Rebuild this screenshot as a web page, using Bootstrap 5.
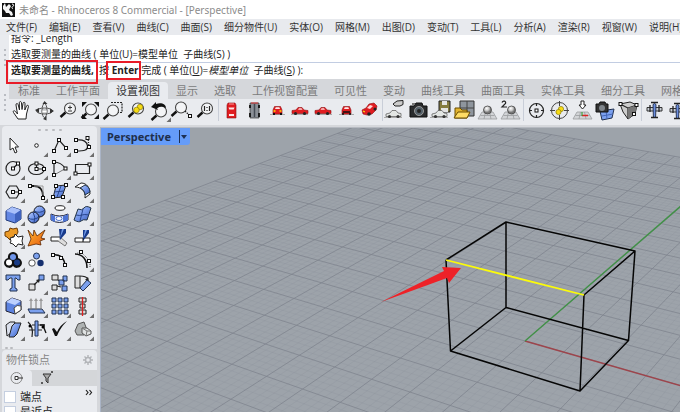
<!DOCTYPE html>
<html lang="zh-CN">
<head>
<meta charset="utf-8">
<meta name="viewport" content="width=device-width, initial-scale=1">
<title>未命名 - Rhinoceros 8 Commercial - [Perspective]</title>
<link href="https://cdn.jsdelivr.net/npm/bootstrap@5.3.0/dist/css/bootstrap.min.css" rel="stylesheet">
<style>
:root{--panel:#e9ebef;--chrome:#d5d7db;--ink:#222}
body{font:10px/16px "Open Sans","Noto Sans CJK SC",sans-serif;color:var(--ink);background:var(--chrome)}
.titlebar{height:19px;color:#8c8c8c;padding-left:2px;gap:4px;font-family:"Noto Sans","Noto Sans CJK SC",sans-serif}
.menubar{height:16px;background:#e8eaee;padding-left:6px;gap:12px}
.menubar a{color:#333;text-decoration:none}
.cmd{height:44px;background:#fff}
.grip{width:9px;background:var(--panel);flex:none}
.grip-dots{width:2px;background:repeating-linear-gradient(#b9bcc2 0 2px,transparent 2px 5px);height:17px}
.history{height:28px;border-bottom:1px solid #c2cde2}
.history div{line-height:16px;padding-left:2px}
.prompt{height:16px;line-height:15px;padding-left:2px}
.prompt input{border:0;outline:0;padding:0;background:transparent;font:inherit;min-width:0}
.callout{position:absolute;border:2px solid #e81c28}
.callout-a{left:6px;top:60px;width:92px;height:24px}
.callout-b{left:106px;top:61px;width:35px;height:19px}
.tabs{height:20px;padding:3px 0 0 1px}
.tabs button{border:0;background:transparent;padding:0 8px;font-size:11px;line-height:17px;color:#7b7b7b}
.tabs button.active{background:var(--panel);color:#333;border-radius:4px 4px 0 0}
.tools{background:var(--panel);height:26px;padding-left:1px}
.tool{width:23px;height:23px;padding:0;border:0;border-radius:0;background:transparent;flex:none;line-height:0;display:block}
.tool svg{width:23px;height:23px;display:block;overflow:visible}
.rule{width:1px;height:22px;background:#c9ced8;margin:0 1px;flex:none}
.side{width:100px;padding:1px 3px 0 2px;flex:none}
.palette{background:var(--panel);border-radius:4px 4px 0 0}
.dots{height:8px}
.dots i,.foot i{width:3px;height:2px;background:#b8babe;border-radius:1px}
.foot{height:8px;gap:2px;padding-left:3px}
.palette-grid{display:grid;grid-template-columns:repeat(4,23px)}
.snap{margin-top:1px;background:var(--panel);border-radius:4px 4px 0 0;overflow:hidden}
.snap h2{font-size:11px;line-height:20px;color:#858585;margin:0;font-weight:400}
.snap-tabs{background:#d4d6d9;height:16px}
.snap-tabs button{border:0;background:transparent;width:30px;height:16px;padding:0}
.snap-tabs button.active{background:var(--panel);border-radius:0 4px 0 0}
.checks{padding-top:3px}
.snap label{font-size:11px;line-height:15px}
.snap input{appearance:none;width:12px;height:12px;background:#fff;border:1px solid #c5cfe0;margin:0 4px 0 2px;flex:none}
.view{background:#9da3aa;border-left:1px solid #aab4c6;border-top:1px solid #b6bac1;margin-top:2px;min-width:0}
.view-label{position:absolute;left:0;top:0;background:#659cf9;height:17px;padding:0 3px 0 6px;border:0;border-radius:0 0 3px 0;font:bold 11px/16px "Noto Sans",sans-serif;color:#1f2f4b}
.view-label span{border-left:1px solid #1d3054;height:13px;padding-left:1px}
.s{fill:none;stroke:#222;stroke-width:1.2}
.w{fill:#fff;stroke:#222}
.b{fill:#7ba0ee;stroke:#20304f}
.y{fill:#f7dc14;stroke:#7b6b00;stroke-width:.6}
.r{fill:#e01c20;stroke:#8b0f12;stroke-width:.6}
</style>
</head>
<body class="vh-100 overflow-hidden d-flex flex-column position-relative">
<svg width="0" height="0" class="position-absolute" aria-hidden="true">
 <defs>
  <linearGradient id="blue" x2="1" y2="1"><stop stop-color="#b9cdfb"/><stop offset=".5" stop-color="#7396ea"/><stop offset="1" stop-color="#3558b5"/></linearGradient>
  <linearGradient id="flame" y2="1" x2="1"><stop stop-color="#ffb52e"/><stop offset="1" stop-color="#e65a10"/></linearGradient>
  <radialGradient id="ball" cx=".4" cy=".3"><stop stop-color="#fff"/><stop offset=".6" stop-color="#c5c5c5"/><stop offset="1" stop-color="#777"/></radialGradient>
  <path id="more" d="M23 18.500V23H18.500z" fill="#6d6d6d"/>
  <rect id="pt" x="-1.500" y="-1.500" width="3" height="3" fill="#fff" stroke="#111"/>
  <g id="lens"><path d="M7.500 13.500 2.500 18" stroke="#111" stroke-width="2.400"/><circle cx="12" cy="9.500" r="5.500" fill="#f3f4f6" stroke="#444" stroke-width="1.100"/></g>
  <g id="car"><path d="M3 15.500h17" stroke="#aaa"/><path d="M4 11.500 8 11l2-2.500h4l2 2.500 4 .5v3H4z" class="r"/><path d="M10 10.800 11 9.300h2.500l1 1.500z" fill="#ffd5d5"/><circle cx="7.500" cy="14.500" r="1.600" fill="#222"/><circle cx="16.500" cy="14.500" r="1.600" fill="#222"/></g>
  <g id="graycar"><path d="M2 18.500h18" stroke="#aaa"/><path d="M4 15l4-1 2-2.500h4l2 2.500 3 .5v3H4z" fill="#e3e6e4" stroke="#555" stroke-width=".7"/><circle cx="7.500" cy="17.500" r="1.600" fill="#333"/><circle cx="16" cy="17.500" r="1.600" fill="#333"/></g>
  <path id="floor" d="M6 14h11l4 7H2zM4.500 17.500h14M9.500 14 8 21M13.500 14l1.500 7" fill="#d2d4d7" stroke="#9b9da0" stroke-width=".8"/>
  <g id="plane"><path d="M4 8.500h15v3.500H4z" fill="#c9ced6" stroke="#222" stroke-width=".9"/><path d="M10 5.500q1.500-2 3 0l-.4 13h-2.200z" fill="#6c8fe0" stroke="#1d2a48" stroke-width=".9"/><path d="M8 3.500h7M7 6v7M16 6v7M8 18.500h7" stroke="#222" stroke-width="1.300"/></g>
 </defs>
</svg>

<header class="titlebar bg-white d-flex align-items-center flex-shrink-0">
 <svg width="13" height="15" viewBox="0 0 13 15"><path d="M0 1h13v14H0z" fill="#111"/><path d="M1 4l2-3 1 4 3-3 2 2-2 4 3 2 1 3-2 1-2-3-3 0-1-2-2-2z" fill="#f4f4f4"/><path d="M10 2c2 0 2 2 1 2.500s-2 1 0 2.500" stroke="#fff" fill="none"/></svg>
 <span>未命名 - Rhinoceros 8 Commercial - [Perspective]</span>
</header>
<nav class="menubar d-flex align-items-center text-nowrap overflow-hidden flex-shrink-0">
 <a href="#">文件(F)</a><a href="#">编辑(E)</a><a href="#">查看(V)</a><a href="#">曲线(C)</a><a href="#">曲面(S)</a><a href="#">细分物件(U)</a><a href="#">实体(O)</a><a href="#">网格(M)</a><a href="#">出图(D)</a><a href="#">变动(T)</a><a href="#">工具(L)</a><a href="#">分析(A)</a><a href="#">渲染(R)</a><a href="#">视窗(W)</a><a href="#">说明(H)</a>
</nav>
<section class="cmd d-flex flex-shrink-0">
 <div class="grip d-flex justify-content-center align-items-center"><div class="grip-dots"></div></div>
 <div class="flex-grow-1 overflow-hidden text-nowrap">
  <div class="history d-flex flex-column justify-content-end overflow-hidden"><div>指令: _Length</div><div>选取要测量的曲线 ( 单位(U)=模型单位&nbsp; 子曲线(S) )</div></div>
  <div class="prompt d-flex"><label for="cmdline"><b>选取要测量的曲线,</b>&nbsp; 按 <b>Enter</b> 完成 ( 单位(<u>U</u>)=<i>模型单位</i>&nbsp; 子曲线(<u>S</u>) ):</label><input id="cmdline" class="flex-grow-1" type="text"></div>
 </div>
</section>
<div class="callout callout-a"></div><div class="callout callout-b"></div>

<section class="d-flex flex-shrink-0">
 <div class="grip d-flex justify-content-center align-items-center"><div class="grip-dots"></div></div>
 <div class="flex-grow-1 overflow-hidden">
  <div class="tabs d-flex text-nowrap"><button>标准</button><button>工作平面</button><button class="active">设置视图</button><button>显示</button><button>选取</button><button>工作视窗配置</button><button>可见性</button><button>变动</button><button>曲线工具</button><button>曲面工具</button><button>实体工具</button><button>细分工具</button><button>网格工具</button></div>
  <div class="tools d-flex">
   <button class="btn tool" aria-label="平移"><svg viewBox="0 0 23 23"><path d="M8 20 3.500 13.500c-1-1.500.8-2.500 2-1L7.500 15 6 6c-.2-2 1.800-2 2.200-.2L9.500 11 9.300 4c0-2 2-2 2.200 0l.5 6.500L13 4.500c.3-1.800 2.200-1.500 2 .3L14.800 11l1.700-4c.8-1.500 2.300-.8 1.900.8L16.500 15l-.5 5z" class="w"/></svg></button>
   <button class="btn tool" aria-label="旋转视图"><svg viewBox="0 0 23 23"><ellipse cx="11.500" cy="12" rx="8" ry="3" fill="none" stroke="#555"/><ellipse cx="11.500" cy="11.500" rx="2.500" ry="7" fill="none" stroke="#555"/><path d="M11.500 2 14.500 5h-5zM2 11l4-2v5zM21 12l-4-2.500v5zM10 20l3.500-3v4.500z" fill="#333"/><path d="M9 11h5v3H9z" fill="#fff" stroke="#777" stroke-width=".6"/></svg></button>
   <button class="btn tool" aria-label="缩放"><svg viewBox="0 0 23 23"><use href="#lens" x="2"/><path d="M14 6.500v4M12 8.500h4M12 12h4" fill="none" stroke="#333"/></svg></button>
   <button class="btn tool" aria-label="缩放至范围"><svg viewBox="0 0 23 23"><use href="#lens" y="1"/><path d="M3 3h5L3 8zM20 3v5l-5-5zM20 20h-5l5-5zM3 20v-5l5 5z" fill="#111"/></svg></button>
   <button class="btn tool" aria-label="框选缩放"><svg viewBox="0 0 23 23"><path d="M9 3.500h11v10h-5" class="s" stroke-dasharray="2 1"/><use href="#lens" x="-1" y="2"/></svg></button>
   <button class="btn tool" aria-label="缩放至选取物体"><svg viewBox="0 0 23 23"><use href="#lens" x="1"/><circle cx="15" cy="8" r="2.800" class="y"/><circle cx="11.500" cy="11" r="2.800" class="y"/></svg></button>
   <button class="btn tool" aria-label="复原视图"><svg viewBox="0 0 23 23"><use href="#lens" x="1" y="3"/><path d="M3 8l5-5v2c5-2 10 0 10 4-3-2-6-2-9 0l1 2z" fill="#111"/><use href="#more"/></svg></button>
   <button class="btn tool" aria-label="缩放一比一"><svg viewBox="0 0 23 23"><use href="#lens" x="-2" y="-1"/><path d="M14 12l4 4" class="s" stroke-dasharray="1.500 1"/><use href="#pt" x="19" y="17"/></svg></button>
   <button class="btn tool" aria-label="一比一"><svg viewBox="0 0 23 23"><use href="#lens" x="1"/><path d="M10.500 7v5M15.500 7v5M13 8v1M13 11v1" class="s"/></svg></button>
   <span class="rule"></span>
   <button class="btn tool" aria-label="俯视"><svg viewBox="0 0 23 23"><path d="M8 4h7l1 2v13H7V6z" class="r"/><path d="M8.500 8.500h6l-.8 2H9.300zM9 15h5v2H9z" fill="#ffe4e4"/><path d="M9 5h5" stroke="#ff9a9a"/></svg></button>
   <button class="btn tool" aria-label="仰视"><svg viewBox="0 0 23 23"><path d="M7 4h9v15H7z" fill="#8b9097" stroke="#333" stroke-width=".7"/><path d="M11.500 5v13" stroke="#454b54" stroke-width="1.500"/><path d="M7 6v3M16 6v3M7 14v4M16 14v4" stroke="#111" stroke-width="1.800"/><path d="M8 4h7" stroke="#d33"/></svg></button>
   <button class="btn tool" aria-label="后视"><svg viewBox="0 0 23 23"><path d="M4 15.500h15" stroke="#aaa"/><path d="M7 11l1.500-3.500h6L16 11v4H7z" class="r"/><path d="M9 10l.8-1.800h3.500L14 10z" fill="#ffe8e8"/><path d="M7.500 12h2M13.500 12h2" stroke="#ffe000" stroke-width="1.500"/><path d="M7 15h2M14 15h2" stroke="#111" stroke-width="2"/></svg></button>
   <button class="btn tool" aria-label="左视"><svg viewBox="0 0 23 23"><use href="#car" x="-1"/></svg></button>
   <button class="btn tool" aria-label="右视"><svg viewBox="0 0 23 23"><g transform="matrix(-1 0 0 1 23 0)"><use href="#car"/></g></svg></button>
   <button class="btn tool" aria-label="前视"><svg viewBox="0 0 23 23"><path d="M4 15.500h15" stroke="#aaa"/><path d="M7 11l1.500-3.500h6L16 11v4H7z" class="r"/><path d="M9 10l.8-1.800h3.500L14 10z" fill="#ffe8e8"/><path d="M8 13h7M7 15h2M14 15h2" stroke="#111" stroke-width="1.500"/></svg></button>
   <button class="btn tool" aria-label="透视"><svg viewBox="0 0 23 23"><path d="M4 11l4-2 3-4 5-1 3 3-1 4-4 4-5 1-4-1z" class="r"/><path d="M9 9l3-3 3 1-3 3z" fill="#ffd9d9"/><path d="M5 12l2 1" stroke="#ff0"/><circle cx="11" cy="15" r="1.800" fill="#222"/><circle cx="17" cy="10" r="1.500" fill="#222"/></svg></button>
   <span class="rule"></span>
   <button class="btn tool" aria-label="视图方向"><svg viewBox="0 0 23 23"><use href="#graycar" x="-2"/><path d="M9 5l4-3 6-.5v4L16 7h-5z" fill="#ccc" stroke="#222"/></svg></button>
   <button class="btn tool" aria-label="相机"><svg viewBox="0 0 23 23"><path d="M3 7h4l2-3h6l1 3h4v11H3z" fill="#292b2d" stroke="#111"/><circle cx="12" cy="12" r="4.500" fill="#546069" stroke="#999"/><circle cx="12" cy="12" r="2" fill="#222"/><path d="M5 5h3" stroke="#777" stroke-width="2"/></svg></button>
   <button class="btn tool" aria-label="储存视图"><svg viewBox="0 0 23 23"><path d="M9 2h11v11H9z" fill="#857c40" stroke="#222"/><path d="M12 2h5v4h-5zM11 9h7v4h-7z" fill="#e4e4e4"/><use href="#graycar" x="-2"/></svg></button>
   <button class="btn tool" aria-label="打开视图"><svg viewBox="0 0 23 23"><path d="M7 2h14v15H7z" fill="#8e959d" stroke="#333"/><path d="M7 9h14M14 2v15" stroke="#444"/><path d="M2 9h5l2 2h5v8H2z" fill="#e3b42e" stroke="#6a4d00"/><path d="M1 19l4-6h12l-3 6z" fill="#ffdc65" stroke="#6a4d00"/></svg></button>
   <button class="btn tool" aria-label="球体视图"><svg viewBox="0 0 23 23"><use href="#floor" y="-1"/><circle cx="11.500" cy="11" r="4" fill="url(#ball)" stroke="#444" stroke-width=".8"/></svg></button>
   <button class="btn tool" aria-label="两点透视"><svg viewBox="0 0 23 23"><use href="#floor" y="-1"/><circle cx="12.500" cy="11" r="4" fill="url(#ball)" stroke="#444" stroke-width=".8"/><path d="M3 3.500C4 1 7.500 2 6.500 4.500L3 8h5" class="s"/></svg></button>
   <span class="rule"></span>
   <button class="btn tool" aria-label="目标点"><svg viewBox="0 0 23 23"><circle cx="11.500" cy="11.500" r="7" class="s"/><path d="M11.500 4v3M11.500 16v3M4 11.500h3M16 11.500h3" class="s"/><use href="#pt" x="11.500" y="11.500"/></svg></button>
   <button class="btn tool" aria-label="目标物件"><svg viewBox="0 0 23 23"><circle cx="11.500" cy="11.500" r="8" fill="none" stroke="#444"/><path d="M11.500 2v5M11.500 16v5M2 11.500h5M16 11.500h5" fill="none" stroke="#444"/><circle cx="13" cy="10" r="2.600" class="y"/><circle cx="10.500" cy="13" r="2.600" class="y"/></svg></button>
   <button class="btn tool" aria-label="工作平面"><svg viewBox="0 0 23 23"><use href="#floor" y="-1"/><path d="M10 2h3v4h2l-3.500 4L8 6h2z" class="w"/><path d="M11 16.500h6" stroke="#d22" stroke-width="1.500"/><path d="M11 17v-4" stroke="#292"/></svg></button>
   <button class="btn tool" aria-label="相机平面"><svg viewBox="0 0 23 23"><path d="M6 12l14-2-2 9-10 2z" class="b"/><path d="M8 17l11-2M12 11l1 9" stroke="#4466b7"/><path d="M2 5h3l1-2h5l1 2h2v8H2z" fill="#333" stroke="#111"/><circle cx="8" cy="9" r="3" fill="#7f858b"/></svg></button>
   <button class="btn tool" aria-label="视角框"><svg viewBox="0 0 23 23"><path d="M3 5l10-2 7 3-2 9-7 5-5-7z" fill="#ccc" stroke="#222"/><path d="M3 5l8 4v11M11 9l9-3" class="s"/><path d="M11 9l9-3-2 9-7 5z" fill="#777"/><use href="#pt" x="3.500" y="5"/><use href="#pt" x="19.500" y="6"/><use href="#pt" x="17" y="15"/></svg></button>
   <span class="rule"></span>
   <button class="btn tool" aria-label="飞行"><svg viewBox="0 0 23 23"><use href="#plane"/></svg></button>
   <button class="btn tool" aria-label="飞行设置"><svg viewBox="0 0 23 23"><use href="#plane" y="1"/></svg></button>
  </div>
 </div>
</section>

<main class="d-flex flex-grow-1 overflow-hidden">
 <aside class="side d-flex flex-column">
  <div class="palette">
   <div class="dots d-flex justify-content-center align-items-center gap-1"><i></i><i></i><i></i><i></i></div>
   <div class="palette-grid">
    <button class="btn tool" aria-label="选取"><svg viewBox="0 0 23 23"><path d="M8 4v12l3-2 2 5 2-1-2-5h3.500z" class="w"/></svg></button>
    <button class="btn tool" aria-label="点"><svg viewBox="0 0 23 23"><circle cx="11.500" cy="11.500" r="1.800" class="w"/><use href="#more"/></svg></button>
    <button class="btn tool" aria-label="多重直线"><svg viewBox="0 0 23 23"><path d="M6 17 11 6l7 8" class="s"/><use href="#pt" x="6" y="17"/><use href="#pt" x="11" y="6"/><use href="#pt" x="18" y="14"/><use href="#more"/></svg></button>
    <button class="btn tool" aria-label="控制点曲线"><svg viewBox="0 0 23 23"><path d="M5 17c9 0 12-1 11.500-5C16 8 13 5 5 6" class="s"/><path d="M17 4l1 9" class="s" stroke-dasharray="1 1"/><use href="#pt" x="5" y="17"/><use href="#pt" x="5" y="6"/><use href="#pt" x="16.500" y="4"/><use href="#pt" x="18" y="13"/><use href="#more"/></svg></button>

    <button class="btn tool" aria-label="圆"><svg viewBox="0 0 23 23"><circle cx="11" cy="11.500" r="7" class="s"/><path d="M11 11.500 16 6.500" class="s"/><use href="#pt" x="11" y="11.500"/><use href="#pt" x="16" y="6.500"/><use href="#more"/></svg></button>
    <button class="btn tool" aria-label="椭圆"><svg viewBox="0 0 23 23"><ellipse cx="11.500" cy="12" rx="8" ry="5.500" class="s"/><path d="M11.500 6.500V12h8" class="s"/><use href="#pt" x="11.500" y="12"/><use href="#pt" x="11.500" y="6.500"/><use href="#pt" x="19" y="12"/><use href="#more"/></svg></button>
    <button class="btn tool" aria-label="圆弧"><svg viewBox="0 0 23 23"><path d="M6 18V5c6 0 9 3 11.500 6.500" class="s"/><path d="M6 18l11.500-6.500" stroke="#777"/><use href="#pt" x="6" y="18"/><use href="#pt" x="6" y="5"/><use href="#pt" x="17.500" y="11.500"/><use href="#more"/></svg></button>
    <button class="btn tool" aria-label="矩形"><svg viewBox="0 0 23 23"><path d="M4.500 7.500h14v9h-14z" class="s"/><use href="#pt" x="4.500" y="16.500"/><use href="#pt" x="18.500" y="7.500"/><use href="#more"/></svg></button>

    <button class="btn tool" aria-label="多边形"><svg viewBox="0 0 23 23"><path d="M4 12l3.500-6h7l3.500 6-3.500 6h-7zM11 12h7" class="s"/><use href="#pt" x="11" y="12"/><use href="#pt" x="18" y="12"/><use href="#more"/></svg></button>
    <button class="btn tool" aria-label="圆角曲线"><svg viewBox="0 0 23 23"><path d="M4 6h5c6 0 9 4 9 10v3" fill="none" stroke="#111" stroke-width="1.800"/><path d="M9 6h9v9" stroke="#999" fill="none"/><use href="#pt" x="5" y="6"/><use href="#pt" x="18" y="18"/><use href="#more"/></svg></button>
    <button class="btn tool" aria-label="曲面"><svg viewBox="0 0 23 23"><path d="M8 6l10-1-4 12-9 1z" fill="url(#blue)" stroke="#222"/><path d="M6 12l10-1M13 6 9 17" stroke="#28458c"/><use href="#pt" x="8" y="6"/><use href="#pt" x="18" y="5"/><use href="#pt" x="15" y="17"/><use href="#pt" x="5" y="17"/><use href="#more"/></svg></button>
    <button class="btn tool" aria-label="旋转曲面"><svg viewBox="0 0 23 23"><path d="M4 7l6-4c6 0 9 5 9 11l-5 4c1-7-4-11-10-11z" fill="#fff" stroke="#222"/><path d="M9 8l5-3c3 1 5 4 5 7l-5 3c0-3-2-6-5-7z" fill="url(#blue)" stroke="#234"/><use href="#more"/></svg></button>

    <button class="btn tool" aria-label="立方体"><svg viewBox="0 0 23 23"><path d="M4 8l6-4 9 3v9l-6 4-9-3z" fill="#6387e3" stroke="#223b7a"/><path d="M4 8l6-4 9 3-6 4z" fill="#a9c0fa"/><path d="M13 11l6-4v9l-6 4z" fill="#3f62bd"/><use href="#more"/></svg></button>
    <button class="btn tool" aria-label="实体"><svg viewBox="0 0 23 23"><circle cx="14.500" cy="8.500" r="5.500" fill="url(#blue)" stroke="#111"/><circle cx="8.500" cy="14.500" r="5.500" fill="url(#blue)" stroke="#111"/><path d="M3 15q5 3 11-1M9 8q6 3 11-1M8 9q3 5 1 11" stroke="#28458c" fill="none"/><use href="#more"/></svg></button>
    <button class="btn tool" aria-label="挤出"><svg viewBox="0 0 23 23"><ellipse cx="12" cy="5" rx="5" ry="2.300" class="w"/><path d="M3 11q8.500 4 17 0v6q-8.500 5-17 0z" fill="#dfe9ff" stroke="#223"/><path d="M3 11q2 1.500 4 2v6q-2-.5-4-2zM15 13q3-.6 5-2v6q-2 1.500-5 2z" fill="#4c73d4"/><ellipse cx="11" cy="15.500" rx="3" ry="2" fill="#fff" stroke="#57c"/><use href="#more"/></svg></button>
    <button class="btn tool" aria-label="布帘"><svg viewBox="0 0 23 23"><path d="M7 6q4 2 6-1t7 0l-4 12q-4-1-6 1t-7-1z" fill="url(#blue)" stroke="#234"/><path d="M5 12q4 1 6 0t7 0M12 6 9 18" stroke="#28458c" fill="none"/><use href="#more"/></svg></button>

    <button class="btn tool" aria-label="组合"><svg viewBox="0 0 23 23"><path d="M3 6l4-1 1-3 3 1 4-1 1 4-2 4-4 1-2 3-3-3-2-1z" fill="#eb9a27" stroke="#6e3c05"/><path d="M8 12l4-1 1-3 3 3 5-1-1 5 1 4-5-1-2 3-3-3-3-1 1-2z" class="w"/><use href="#more"/></svg></button>
    <button class="btn tool" aria-label="炸开"><svg viewBox="0 0 23 23"><path d="M3 4l5 6L9 4l3 6 8-6-4 8 4 1-5 2 1 4-5-1-8 2 3-7z" fill="url(#flame)" stroke="#5b2400" stroke-width=".8"/></svg></button>
    <button class="btn tool" aria-label="修剪"><svg viewBox="0 0 23 23"><path d="M3 11h9v4H3z" class="w"/><path d="M12 11l7 6-2 3-7-5" fill="#ddd" stroke="#777"/><path d="M11 3h7v4l-6 7z" fill="#173a8b"/><path d="M14 3h2l-4 9z" fill="#719be8"/></svg></button>
    <button class="btn tool" aria-label="分割"><svg viewBox="0 0 23 23"><path d="M4 12h15v4H4z" class="w"/><path d="M12 4h6v3l-6 8z" fill="#173a8b"/><path d="M14 4h2l-4 9z" fill="#719be8"/><path d="M12 12v4" stroke="#111"/></svg></button>

    <button class="btn tool" aria-label="群组"><svg viewBox="0 0 23 23"><path d="M11 3a5 5 0 0 1 5 6 5 5 0 1 1-5 8 5 5 0 1 1-5-8 5 5 0 0 1 5-6z" fill="#111"/><circle cx="11" cy="8" r="3" fill="#6f96ec"/><circle cx="7" cy="13.500" r="3" fill="#fff"/><circle cx="15" cy="13.500" r="3" fill="#193b85"/><use href="#more"/></svg></button>
    <button class="btn tool" aria-label="解散群组"><svg viewBox="0 0 23 23"><circle cx="11.500" cy="7" r="3" class="b"/><circle cx="7" cy="14" r="3.200" fill="#fff" stroke="#555"/><circle cx="15.500" cy="14" r="3.200" fill="#152f6e"/></svg></button>
    <button class="btn tool" aria-label="编辑点"><svg viewBox="0 0 23 23"><path d="M5 6c8-1 12 4 12 12" fill="none" stroke="#111" stroke-width="1.500"/><use href="#pt" x="5" y="6"/><use href="#pt" x="13" y="9"/><use href="#pt" x="17" y="16"/></svg></button>
    <button class="btn tool" aria-label="控制点"><svg viewBox="0 0 23 23"><path d="M4 5c8 0 12 6 12 14" fill="none" stroke="#111" stroke-width="1.500"/><path d="M4 5l6-2 9 9v6" fill="none" stroke="#444" stroke-dasharray="1 1"/><use href="#pt" x="10" y="3"/><use href="#pt" x="18" y="12"/><use href="#more"/></svg></button>

    <button class="btn tool" aria-label="文字"><svg viewBox="0 0 23 23"><path d="M4 3h14v5h-2l-2-2h-1v10l2 1v2H8v-2l2-1V6H8L6 8H4z" class="b"/></svg></button>
    <button class="btn tool" aria-label="移动"><svg viewBox="0 0 23 23"><path d="M4 12h6v6H4z" fill="#ddd" stroke="#222"/><path d="M9 13l5-5" class="s"/><path d="M15 7l-1 4-3-3z" fill="#222"/><path d="M14 3h5v5h-5z" class="b"/><use href="#more"/></svg></button>
    <button class="btn tool" aria-label="复制"><svg viewBox="0 0 23 23"><path d="M4 3h6v5H4zM4 13h5v5H4z" fill="#ddd" stroke="#222"/><path d="M10 8l3 2M9 14l4 1" class="s"/><path d="M15 4h4v5h-4zM11 8h5v5h-5zM14 14h5v5h-5z" class="b"/></svg></button>
    <button class="btn tool" aria-label="旋转"><svg viewBox="0 0 23 23"><path d="M4 4h5v12H4z" fill="#ddd" stroke="#222"/><path d="M9 4q6 0 8 3" class="s"/><path d="M18 9l-4-1 3-3z" fill="#222"/><path d="M9 16l7-8 4 3-8 8z" class="b"/></svg></button>

    <button class="btn tool" aria-label="布尔"><svg viewBox="0 0 23 23"><path d="M4 7l6-4 9 3v9l-6 4-9-3z" fill="#5d83e0" stroke="#223"/><path d="M4 7l6-4 9 3-6 4z" fill="#bcd0ff"/><path d="M12 13q3-4 7-2v4l-6 4z" fill="#fff" stroke="#444"/><use href="#more"/></svg></button>
    <button class="btn tool" aria-label="投影"><svg viewBox="0 0 23 23"><path d="M3 14h14l3 4H5z" class="b"/><path d="M6 15V5M11 15V5M16 15V5" stroke="#777"/><path d="M6 3l-2 3h4zM11 3 9 6h4zM16 3l-2 3h4z" fill="#999"/><use href="#more"/></svg></button>
    <button class="btn tool" aria-label="阵列"><svg viewBox="0 0 23 23"><path d="M4 3h4v4H4zM10 3h4v4h-4zM16 3h4v4h-4zM4 9h4v4H4zM10 9h4v4h-4zM16 9h4v4h-4zM4 15h4v4H4zM10 15h4v4h-4zM16 15h4v4h-4z" class="b"/><use href="#more"/></svg></button>
    <button class="btn tool" aria-label="对齐"><svg viewBox="0 0 23 23"><path d="M8 3h7v4H8zM9 9h5v4H9zM8 15h7v4H8z" fill="#ddd" stroke="#222"/><path d="M11.500 2v19" stroke="#dc2020" stroke-width="1.300"/><use href="#more"/></svg></button>

    <button class="btn tool" aria-label="偏移"><svg viewBox="0 0 23 23"><path d="M4 7l4-3h5L9 15l-4 3z" fill="#dbe0ec" stroke="#222"/><path d="M10 8l3-3h6l-4 11-3 3H7z" fill="url(#blue)" stroke="#222"/><use href="#more"/></svg></button>
    <button class="btn tool" aria-label="弯曲"><svg viewBox="0 0 23 23"><path d="M3 4q6 5 4 15M7 7h13M4 12h13" class="s"/><path d="M10 3h3v15h-3z" class="b"/><path d="M15 7h4v3l2 5" fill="none" stroke="#111" stroke-width="1.300"/><circle cx="5" cy="8" r="1.500"/><circle cx="18" cy="9" r="1.500"/><use href="#more"/></svg></button>
    <button class="btn tool" aria-label="检查"><svg viewBox="0 0 23 23"><path d="M4 11l2-1 3 4q3-7 10-11Q12 10 9 18H7z" fill="#111"/><use href="#more"/></svg></button>
    <button class="btn tool" aria-label="建模"><svg viewBox="0 0 23 23"><path d="M4 13l3-7 6-2 3 8-3 5H6z" fill="#aeb2b2" stroke="#555"/><path d="M11 10h5l4 3v3l-5 2-4-3z" fill="#dfe2e2" stroke="#555"/><path d="M11 10l5 3h4M16 13l-1 5" stroke="#777" fill="none"/><use href="#more"/></svg></button>
   </div>
   <div class="foot d-flex align-items-end"><i></i><i></i></div>
  </div>
  <section class="snap flex-grow-1">
   <div class="d-flex justify-content-between align-items-center ps-1 pe-1"><h2>物件锁点</h2><svg width="10" height="10" viewBox="0 0 10 10"><circle cx="5" cy="5" r="2.500" fill="none" stroke="#b2b4b8" stroke-width="1.500"/><path d="M5 0v2M5 8v2M0 5h2M8 5h2M1.500 1.500l1.500 1.500M7 7l1.500 1.500M8.500 1.500 7 3M3 7 1.500 8.500" stroke="#b2b4b8" stroke-width="1.400"/></svg></div>
   <div class="snap-tabs d-flex"><button class="active" aria-label="锁点"><svg width="14" height="14" viewBox="0 0 14 14" class="d-block mx-auto"><circle cx="6.500" cy="7" r="5.500" fill="none" stroke="#888"/><path d="M5 5.500h3v3H5zM8 7h5" fill="#fff" stroke="#333"/></svg></button><button aria-label="过滤器"><svg width="14" height="14" viewBox="0 0 14 14" class="d-block mx-auto"><path d="M3 3h8L8 7v5l-2-2V7z" fill="#aaa" stroke="#333"/><path d="M11 1h2M1 12h2" stroke="#333" stroke-width="1.500"/></svg></button></div>
   <div class="checks">
    <div class="d-flex align-items-center"><input type="checkbox" id="end"><label for="end" class="flex-grow-1">端点</label><svg width="8" height="7" viewBox="0 0 8 7" class="me-1 mb-2"><path d="M1 1l2 2.500L1 6M4.500 1l2 2.500L4.500 6" fill="none" stroke="#222" stroke-width="1.200"/></svg></div>
    <div class="d-flex align-items-center"><input type="checkbox" id="near"><label for="near">最近点</label></div>
   </div>
  </section>
 </aside>
 <section class="view flex-grow-1 position-relative overflow-hidden">
  <svg class="w-100 h-100 d-block" viewBox="101 128 579 284" preserveAspectRatio="xMinYMin slice">
   <path id="minor" fill="none" stroke="#868d97" stroke-opacity=".3" stroke-width=".6"/>
   <path id="major" fill="none" stroke="#7f858e" stroke-opacity=".8" stroke-width="1"/>
   <path d="M525 341 682 386" stroke="#9d454c" stroke-width="1.400"/><path d="M525 341 682 205" stroke="#419147" stroke-width="1.400"/>
   <path d="M446 260 506 222 635 251 584 295M446 260 450.500 351 580 391 584 295M506 222V307.500L450.500 351M506 307.500 628.500 340.500 580 391M635 251 628.500 340.500" fill="none" stroke="#050505" stroke-width="1.500" stroke-linejoin="round"/>
   <path d="M446 260 584 295" stroke="#fbfb09" stroke-width="1.800"/>
   <path d="M381 302 444 271 442 267 461 268 449 283 447 278z" fill="#ee2228"/>
  </svg>
  <button class="view-label d-flex align-items-center">Perspective<span class="d-flex align-items-center ms-2"><svg width="6" height="4" viewBox="0 0 6 4"><path d="M0 0h6L3 4z" fill="#1d3054"/></svg></span></button>
 </section>
</main>
<script src="https://cdn.jsdelivr.net/npm/bootstrap@5.3.0/dist/js/bootstrap.bundle.min.js"></script>
<script>
// Perspective projection of the construction plane, one unit per major grid line.
function project(u, v) {
  const a = -0.01976 * u, b = 0.03738 * v, w = 1 + a + b;
  return ((525 - 1395 * a + 1117 * b) / w).toFixed(2) + ' ' + ((341 - 208 * a - 169 * b) / w).toFixed(2);
}
const extent = 14, paths = { major: '', minor: '' };
for (let i = -extent * 5; i <= extent * 5; i++) {
  const t = i / 5, kind = i % 5 ? 'minor' : 'major';
  paths[kind] += 'M' + project(t, -extent) + 'L' + project(t, extent) + 'M' + project(-extent, t) + 'L' + project(extent, t);
}
for (const k in paths) document.getElementById(k).setAttribute('d', paths[k]);
</script>
</body>
</html>
